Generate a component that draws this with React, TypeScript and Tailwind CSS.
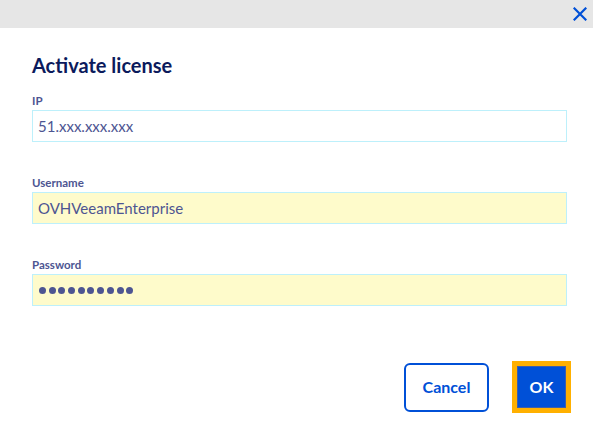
import React from "react";

function Field({ label, value, yellow, password }: { label: string; value?: string; yellow?: boolean; password?: boolean }) {
  return (
    <div className="flex flex-col">
      <div className="text-[11.5px] font-bold leading-[14px] text-[#4d5592]">{label}</div>
      <div
        className={`mt-[2px] h-[32px] w-[535px] border border-[#bdf0fb] flex items-center px-[5px] ${yellow ? "bg-[#fefbcb]" : "bg-white"}`}
      >
        {password ? (
          <div className="flex gap-[2.7px] pl-[1px]">
            {Array.from({ length: 10 }).map((_, i) => (
              <span key={i} className="block w-[7px] h-[7px] rounded-full bg-[#4d5592]" />
            ))}
          </div>
        ) : (
          <span className="text-[15px] text-[#4d5592] leading-none">{value}</span>
        )}
      </div>
    </div>
  );
}

export default function App() {
  return (
    <div className="w-[593px] h-[423px] bg-white flex flex-col font-['Lato',sans-serif]">
      <div className="h-[28px] bg-[#e6e6e6] flex justify-end items-center pr-[6px] shrink-0">
        <svg width="14" height="14" viewBox="0 0 14 14">
          <path d="M1.5 1.5 L12.5 12.5 M12.5 1.5 L1.5 12.5" stroke="#0050d7" strokeWidth="2.2" strokeLinecap="square" />
        </svg>
      </div>
      <div className="pl-[32px] flex flex-col">
        <h2 className="mt-[25px] text-[20px] font-bold leading-[24px] text-[#0b1a5c]">Activate license</h2>
        <div className="mt-[17px] flex flex-col gap-[34px]">
          <Field label="IP" value="51.xxx.xxx.xxx" />
          <Field label="Username" value="OVHVeeamEnterprise" yellow />
          <Field label="Password" yellow password />
        </div>
      </div>
      <div className="mt-auto mb-[10px] flex justify-end items-center gap-[23px] pr-[22px]">
        <button className="w-[85px] h-[49px] rounded-[6px] border-2 border-[#0050d7] bg-white text-[#0050d7] text-[16px] font-bold">
          Cancel
        </button>
        <div className="bg-[#ffb000] p-[5px]">
          <button className="w-[49px] h-[42px] bg-[#0050d7] border border-[#3f5ea8] text-white text-[16px] font-bold flex items-center justify-center">
            OK
          </button>
        </div>
      </div>
    </div>
  );
}
